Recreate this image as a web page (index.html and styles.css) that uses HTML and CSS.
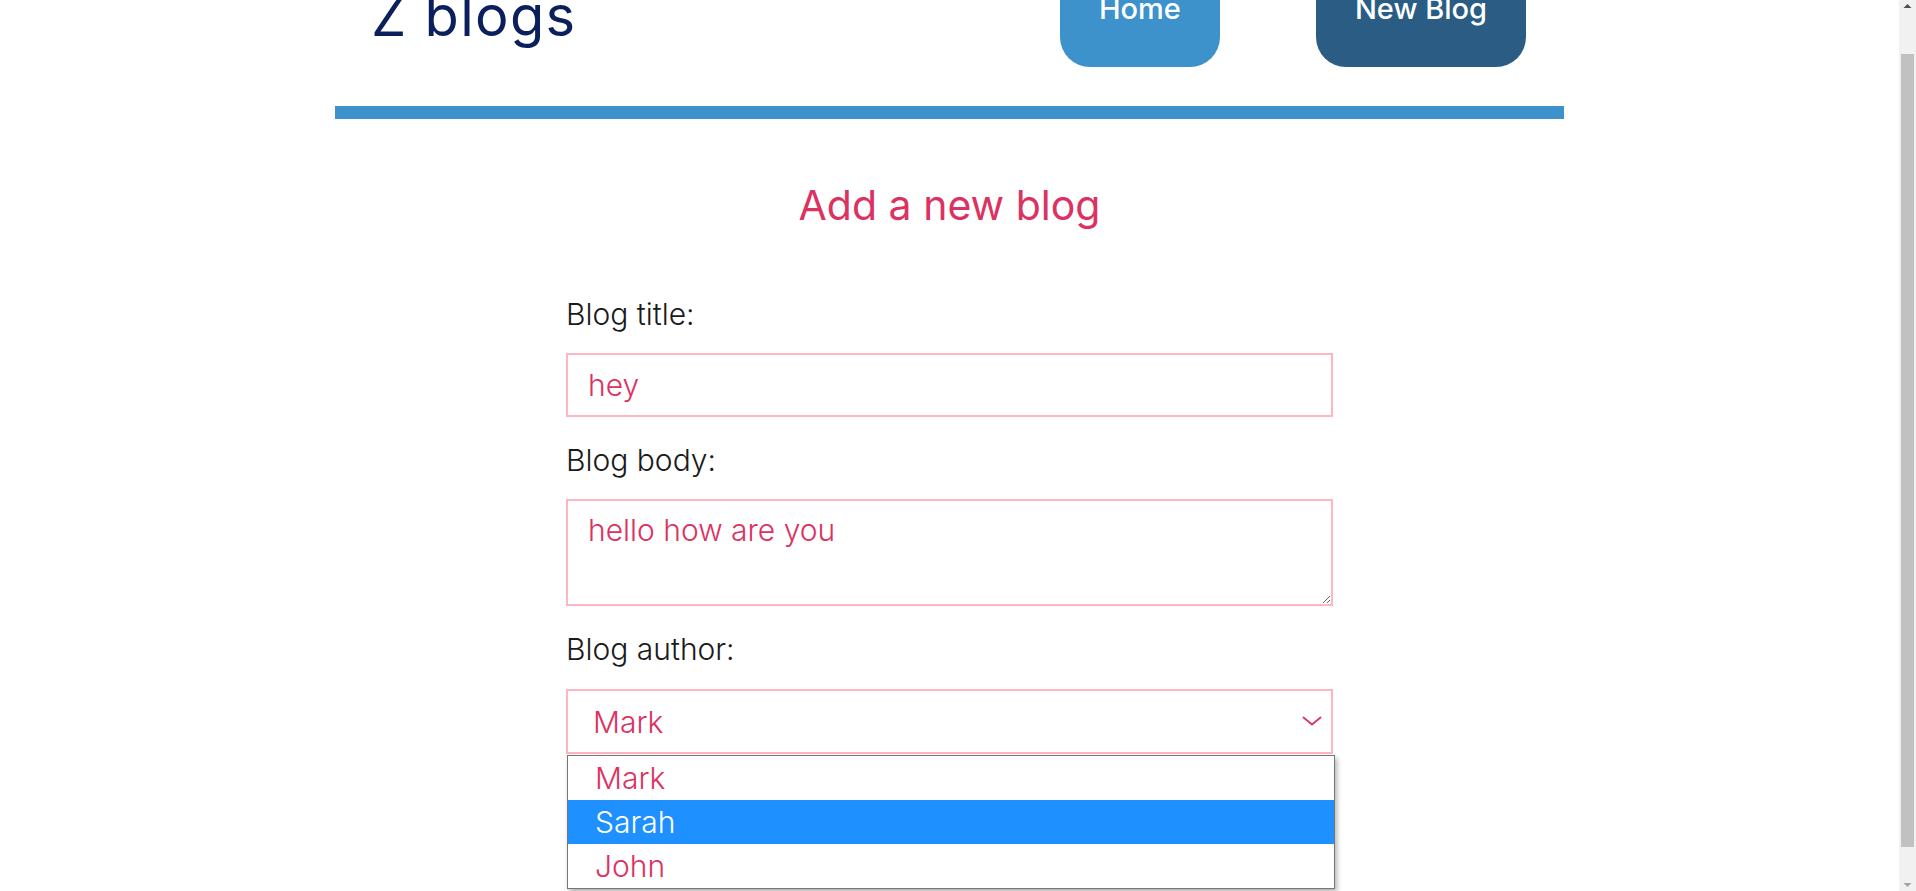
FILE: index.html
```html
<!DOCTYPE html>
<html lang="en">
<head>
<meta charset="utf-8">
<title>Z blogs</title>
<link rel="stylesheet" href="styles.css">
</head>
<body>
<div class="app">
  <nav class="navbar">
    <h1 class="logo">Z blogs</h1>
    <div class="links">
      <a class="nav-btn home" href="#">Home</a>
      <a class="nav-btn new" href="#">New Blog</a>
    </div>
  </nav>
  <main class="content">
    <div class="create">
      <h2>Add a new blog</h2>
      <form class="blog-form">
        <label for="title">Blog title:</label>
        <input id="title" class="field" type="text" value="hey">
        <label for="body">Blog body:</label>
        <textarea id="body" class="field area">hello how are you</textarea>
        <label for="author">Blog author:</label>
        <div class="select-wrap">
          <select id="author" class="field select">
            <option>Mark</option>
            <option>Sarah</option>
            <option>John</option>
          </select>
          <svg class="chevron" width="20" height="10" viewBox="0 0 20 10" aria-hidden="true">
            <polyline points="1.5,1.5 10,8.5 18.5,1.5" fill="none" stroke="#dc3262" stroke-width="1.8" stroke-linecap="round" stroke-linejoin="round"/>
          </svg>
          <ul class="dropdown">
            <li class="opt">Mark</li>
            <li class="opt active">Sarah</li>
            <li class="opt">John</li>
          </ul>
        </div>
      </form>
    </div>
  </main>
</div>
<div class="scrollbar" aria-hidden="true">
  <svg class="sb-arrow" width="17" height="17" viewBox="0 0 17 17"><polygon points="4.5,8 12.5,8 8.5,4" fill="#505050"/></svg>
  <div class="sb-thumb"></div>
  <svg class="sb-arrow sb-down" width="17" height="17" viewBox="0 0 17 17"><polygon points="4.5,9 12.5,9 8.5,13" fill="#a3a3a3"/></svg>
</div>
<script src="script.js"></script>
</body>
</html>
```

FILE: styles.css
```css
html, body {
  margin: 0;
  padding: 0;
}

body {
  padding-right: 17px;
  font-family: Inter, "Noto Sans", "Liberation Sans", sans-serif;
  background: #ffffff;
  color: #1a1a1a;
}

.app {
  width: 1229px;
  margin: 0 auto;
  padding-bottom: 169px;
}

.navbar {
  display: flex;
  justify-content: space-between;
  align-items: flex-start;
  height: 146px;
  padding: 0 38px 0 36px;
  border-bottom: 13px solid #3d92cb;
}

.logo {
  margin: 22px 0 0;
  font-size: 56px;
  line-height: 68px;
  font-weight: 400;
  letter-spacing: 1.3px;
  color: #0b1f5c;
}

.links {
  display: flex;
  gap: 96px;
}

.nav-btn {
  display: block;
  padding: 31px 39px 40px;
  font-size: 29px;
  line-height: 36px;
  font-weight: 500;
  color: #ffffff;
  text-decoration: none;
  border-radius: 30px;
}

.home {
  background: #3d92cb;
}

.new {
  background: #2b5d84;
}

.create {
  width: 767px;
  margin: 0 auto;
  text-align: center;
}

.create h2 {
  margin: 61px 0 67px;
  font-size: 41px;
  line-height: 50px;
  font-weight: 400;
  color: #dc3262;
}

.blog-form label {
  display: block;
  text-align: left;
  font-size: 30px;
  line-height: 34px;
  font-weight: 300;
  color: #1a1a1a;
}

.field {
  display: block;
  width: 100%;
  box-sizing: border-box;
  margin: 22px 0 26px;
  border: 2px solid #ffb6c1;
  border-radius: 0;
  background: #ffffff;
  font-family: inherit;
  font-size: 30px;
  font-weight: 300;
  color: #dc3262;
  outline: none;
}

input.field {
  height: 64px;
  padding: 0 20px;
}

.area {
  height: 107px;
  padding: 11px 20px;
  line-height: normal;
}

.select-wrap {
  position: relative;
  margin-top: 23px;
}

.select {
  margin: 0;
  height: 65px;
  padding: 0 25px;
  appearance: none;
  -webkit-appearance: none;
}

.chevron {
  position: absolute;
  right: 11px;
  top: 27px;
  pointer-events: none;
}

.dropdown {
  position: absolute;
  top: 66px;
  left: 1px;
  width: 768px;
  box-sizing: border-box;
  margin: 0;
  padding: 0;
  list-style: none;
  text-align: left;
  background: #ffffff;
  border: 1px solid #767676;
  box-shadow: 2px 3px 5px rgba(0, 0, 0, 0.3);
}

.opt {
  height: 44px;
  line-height: 44px;
  padding-left: 27px;
  font-size: 30px;
  font-weight: 300;
  color: #dc3262;
}

.opt.active {
  background: #1e90ff;
  color: #ffffff;
}

.scrollbar {
  position: fixed;
  top: 0;
  right: 0;
  bottom: 0;
  width: 17px;
  display: flex;
  flex-direction: column;
  background: #f1f1f1;
}

.sb-arrow {
  display: block;
  flex: none;
}

.sb-thumb {
  flex: none;
  height: 793px;
  margin: 37px 2px 0;
  background: #c1c1c1;
}

.sb-down {
  margin-top: auto;
}
```

FILE: script.js
```js
window.scrollTo(0, 40);
```
